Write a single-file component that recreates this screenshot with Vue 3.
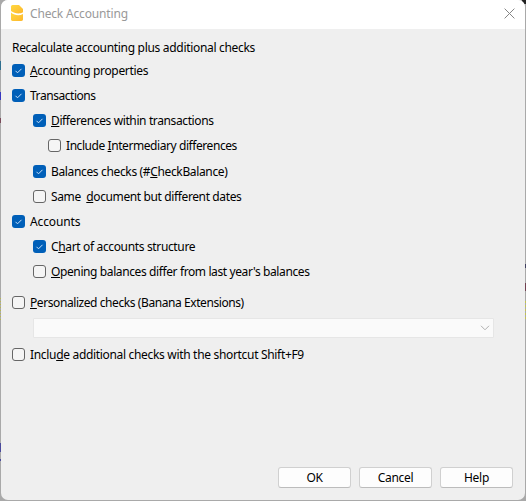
<script setup>
const rows = [
  { pre: '', key: 'A', post: 'ccounting properties', on: true, level: 0, gap: 0, ls: -0.33 },
  { pre: 'Transactions', key: '', post: '', on: true, level: 0, gap: 12, ls: -0.45 },
  { pre: '', key: 'D', post: 'ifferences within transactions', on: true, level: 1, gap: 12, ls: -0.38 },
  { pre: 'Include ', key: 'I', post: 'ntermediary differences', on: false, level: 2, gap: 12, ls: -0.43 },
  { pre: 'Balances checks (#', key: 'C', post: 'heckBalance)', on: true, level: 1, gap: 13, ls: -0.35 },
  { pre: 'Same  ', key: 'd', post: 'ocument but different dates', on: false, level: 1, gap: 12, ls: -0.38 },
  { pre: 'Accounts', key: '', post: '', on: true, level: 0, gap: 12, ls: -0.14 },
  { pre: 'C', key: 'h', post: 'art of accounts structure', on: true, level: 1, gap: 12, ls: -0.35 },
  { pre: '', key: 'O', post: "pening balances differ from last year's balances", on: false, level: 1, gap: 12, ls: -0.39 },
  { pre: '', key: 'P', post: 'ersonalized checks (Banana Extensions)', on: false, level: 0, gap: 18, ls: -0.42, combo: true },
  { pre: 'Inclu', key: 'd', post: 'e additional checks with the shortcut Shift+F9', on: false, level: 0, gap: 10, ls: -0.32 },
]
</script>

<template>
  <div class="desktop">
    <div class="dialog">
      <header class="titlebar">
        <svg class="logo" width="14" height="18" viewBox="0 0 14 18">
          <defs>
            <linearGradient id="g" x1="0" y1="0" x2="1" y2="1">
              <stop offset="0" stop-color="#ffd840" />
              <stop offset="1" stop-color="#fdb72d" />
            </linearGradient>
          </defs>
          <path d="M2.5 1H9L13 5V8.3C10 10.2 4.5 9.8 1 7V2.5Q1 1 2.5 1Z" fill="url(#g)" />
          <path d="M1 8.6C4.5 11.6 9.5 12 13 10V15.6Q13 17 11.5 17H2.5Q1 17 1 15.6Z" fill="url(#g)" />
        </svg>
        <span class="title">Check Accounting</span>
        <svg class="close" width="11" height="11" viewBox="0 0 11 11">
          <path d="M.6.6L10.4 10.4M10.4.6L.6 10.4" stroke="#858585" fill="none" />
        </svg>
      </header>
      <main class="body">
        <p class="intro">Recalculate accounting plus additional checks</p>
        <template v-for="(r, i) in rows" :key="i">
          <label class="row" :class="'level' + r.level" :style="{ marginTop: r.gap + 'px' }">
            <span class="box" :class="{ on: r.on }">
              <svg v-if="r.on" width="13" height="13" viewBox="0 0 13 13">
                <path d="M3.5 6.8L5.5 8.8L9.5 4.8" stroke="#c8e0f8" fill="none" />
              </svg>
            </span>
            <span class="text" :style="{ letterSpacing: r.ls + 'px' }">{{ r.pre }}<span v-if="r.key" class="key">{{ r.key }}</span>{{ r.post }}</span>
          </label>
          <div v-if="r.combo" class="combo">
            <svg width="10" height="6" viewBox="0 0 10 6">
              <path d="M1 .8L5 4.8L9 .8" stroke="#b0b0b0" fill="none" />
            </svg>
          </div>
        </template>
      </main>
      <footer class="buttons">
        <button>OK</button>
        <button>Cancel</button>
        <button>Help</button>
      </footer>
    </div>
  </div>
</template>

<style>
body { margin: 0; overflow: hidden; }
</style>

<style scoped>
.desktop {
  box-sizing: border-box;
  width: 526px;
  height: 501px;
  padding: 0 1px 1px;
  background:
    linear-gradient(#222, #222) right top / 4px 4px no-repeat,
    linear-gradient(#4a4a9c, #4a4a9c) left 443px / 1px 9px no-repeat,
    linear-gradient(#4a4a9c, #4a4a9c) left 459px / 1px 2px no-repeat,
    linear-gradient(#2f6f8f, #2f6f8f) left 61px / 1px 9px no-repeat,
    linear-gradient(#3838c0, #3838c0) left 92px / 1px 8px no-repeat,
    linear-gradient(#7a4a5a, #7a4a5a) left 118px / 1px 5px no-repeat,
    repeating-linear-gradient(#b8b850 0 1px, #a9a9a9 1px 3px) left 298px / 1px 22px no-repeat,
    linear-gradient(#404060, #404060) right 264px / 1px 4px no-repeat,
    linear-gradient(#704050, #704050) right 283px / 1px 8px no-repeat,
    repeating-linear-gradient(#c4c450 0 2px, #a9a9a9 2px 4px) right 301px / 1px 19px no-repeat,
    #a9a9a9;
  font: 12px/16px "Noto Sans", "Open Sans", sans-serif;
  color: #000;
}
.dialog {
  display: flex;
  flex-direction: column;
  height: 500px;
  border-radius: 7px;
  overflow: hidden;
  background: #efefef;
}
.titlebar {
  display: flex;
  align-items: center;
  height: 29px;
  flex: none;
  padding: 0 10px 0 9px;
  background: #fff;
  box-sizing: border-box;
}
.logo { margin-top: -3px; }
.title { margin-left: 6px; margin-top: -1px; color: #999; flex: 1; letter-spacing: -0.17px; }
.close { margin-top: -3px; }
.body { padding: 11px 0 0 11px; flex: 1; }
.intro { margin: 0 0 8px; height: 16px; white-space: pre; letter-spacing: -0.31px; }
.row { display: flex; align-items: center; height: 13px; }
.level1 { padding-left: 21px; }
.level2 { padding-left: 36px; }
.box {
  box-sizing: border-box;
  width: 13px;
  height: 13px;
  flex: none;
  border: 1px solid #666;
  border-radius: 3px;
  background: #f5f5f5;
}
.box.on { border: 0; background: #005fb8; }
.box svg { display: block; }
.text { margin-left: 5px; white-space: pre; }
.key { text-decoration: underline; text-underline-offset: 1px; text-decoration-thickness: 1px; text-decoration-skip-ink: none; }
.combo {
  box-sizing: border-box;
  display: flex;
  align-items: center;
  justify-content: flex-end;
  width: 461px;
  height: 20px;
  margin: 9px 0 0 21px;
  padding-right: 3px;
  border: 1px solid #e6e6e6;
  border-radius: 1px;
  background: #fafafa;
}
.buttons { display: flex; justify-content: flex-end; gap: 8px; padding: 0 12px 12px 0; }
button {
  width: 73px;
  height: 21px;
  padding: 0;
  border: 1px solid #d0d0d0;
  border-bottom-color: #bcbcbc;
  border-radius: 3px;
  background: #fdfdfd;
  font: inherit;
  line-height: 19px;
  letter-spacing: -0.3px;
  color: #000;
}
</style>
